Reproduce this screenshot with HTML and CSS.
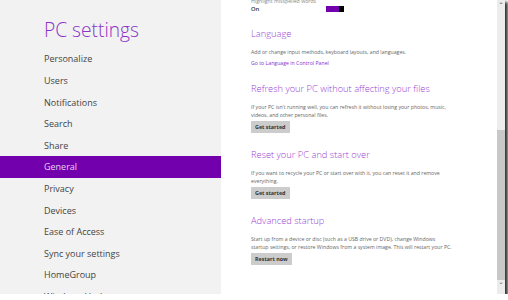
FILE: index.html
```html
<!DOCTYPE html>
<html lang="en">
<head>
  <meta charset="UTF-8" />
  <title>PC settings</title>
  <link rel="stylesheet" href="styles.css">
</head>
<body>
  <div class="window">
    <div class="sidebar">
      <h1 class="title">PC settings</h1>
      <ul class="nav">
        <li>Personalize</li>
        <li>Users</li>
        <li>Notifications</li>
        <li>Search</li>
        <li>Share</li>
        <li class="active">General</li>
        <li>Privacy</li>
        <li>Devices</li>
        <li>Ease of Access</li>
        <li>Sync your settings</li>
        <li>HomeGroup</li>
        <li>Windows Update</li>
      </ul>
    </div>

    <div class="content">
      <div class="setting">
        <div class="setting-label">Highlight misspelled words</div>
        <div class="toggle-row">
          <span class="toggle-state">On</span>
          <span class="toggle"><span class="toggle-thumb"></span></span>
        </div>
      </div>

      <div class="section first">
        <h2>Language</h2>
        <p>Add or change input methods, keyboard layouts, and languages.</p>
        <a class="link">Go to Language in Control Panel</a>
      </div>

      <div class="section">
        <h2>Refresh your PC without affecting your files</h2>
        <p>If your PC isn't running well, you can refresh it without losing your photos, music,<br>videos, and other personal files.</p>
        <button class="btn">Get started</button>
      </div>

      <div class="section">
        <h2>Reset your PC and start over</h2>
        <p>If you want to recycle your PC or start over with it, you can reset it and remove<br>everything.</p>
        <button class="btn">Get started</button>
      </div>

      <div class="section">
        <h2>Advanced startup</h2>
        <p>Start up from a device or disc (such as a USB drive or DVD), change Windows<br>startup settings, or restore Windows from a system image. This will restart your PC.</p>
        <button class="btn">Restart now</button>
      </div>
    </div>

    <div class="scrollbar">
      <span class="arrow up">&#710;</span>
      <div class="track"><div class="thumb"></div></div>
      <span class="arrow down">&#711;</span>
    </div>
  </div>
</body>
</html>
```

FILE: styles.css
```css
* {
  box-sizing: border-box;
}

body {
  margin: 0;
  background: #ffffff;
  font-family: 'Open Sans', 'Noto Sans', sans-serif;
}

.window {
  display: flex;
  width: 505px;
  height: 294px;
  overflow: hidden;
  background: #ffffff;
  box-shadow: 2px 3px 3px 1px rgba(0, 0, 0, 0.8);
}

.sidebar {
  width: 221px;
  flex-shrink: 0;
  background: #f2f2f2;
}

.title {
  margin: 0;
  padding: 18px 0 0 44px;
  font-size: 19.2px;
  line-height: 24px;
  font-weight: 300;
  color: #8b32c8;
}

.nav {
  list-style: none;
  margin: 6.4px 0 0;
  padding: 0;
}

.nav li {
  height: 21.6px;
  line-height: 21.6px;
  padding-left: 44px;
  font-size: 9px;
  color: #444444;
}

.nav li.active {
  background: #7200ac;
  color: #e6d4f0;
}

.content {
  flex: 1;
  padding-left: 30px;
  color: #666666;
}

.setting-label {
  margin-top: -3px;
  font-size: 5.2px;
  line-height: 8px;
  color: #888888;
}

.toggle-row {
  display: flex;
  align-items: center;
  height: 8px;
}

.toggle-state {
  width: 75px;
  font-size: 5.8px;
  font-weight: 600;
  color: #333333;
}

.toggle {
  display: flex;
  justify-content: flex-end;
  width: 18px;
  height: 6px;
  background: #7200ac;
}

.toggle-thumb {
  width: 5px;
  height: 6px;
  background: #000000;
}

.section {
  margin-top: 15.5px;
}

.section.first {
  margin-top: 14px;
}

.section h2 {
  margin: 0;
  font-size: 9.3px;
  line-height: 14px;
  font-weight: 300;
  color: #9a44d2;
}

.section p {
  margin: 6.5px 0 0;
  font-size: 5.2px;
  line-height: 8px;
}

.link {
  display: block;
  margin-top: 3px;
  font-size: 5.2px;
  line-height: 8px;
  color: #8b2ec8;
}

.btn {
  display: block;
  margin-top: 2px;
  height: 12px;
  padding: 0 4px;
  border: none;
  background: #cccccc;
  font-family: inherit;
  font-size: 5.4px;
  font-weight: 700;
  color: #333333;
}

.scrollbar {
  display: flex;
  flex-direction: column;
  width: 8px;
  background: #ececec;
}

.arrow {
  height: 14px;
  font-size: 9px;
  line-height: 14px;
  text-align: center;
  color: #555555;
}

.track {
  flex: 1;
  display: flex;
  flex-direction: column;
  justify-content: flex-end;
}

.thumb {
  height: 150px;
  background: #c8c8c8;
}
```
